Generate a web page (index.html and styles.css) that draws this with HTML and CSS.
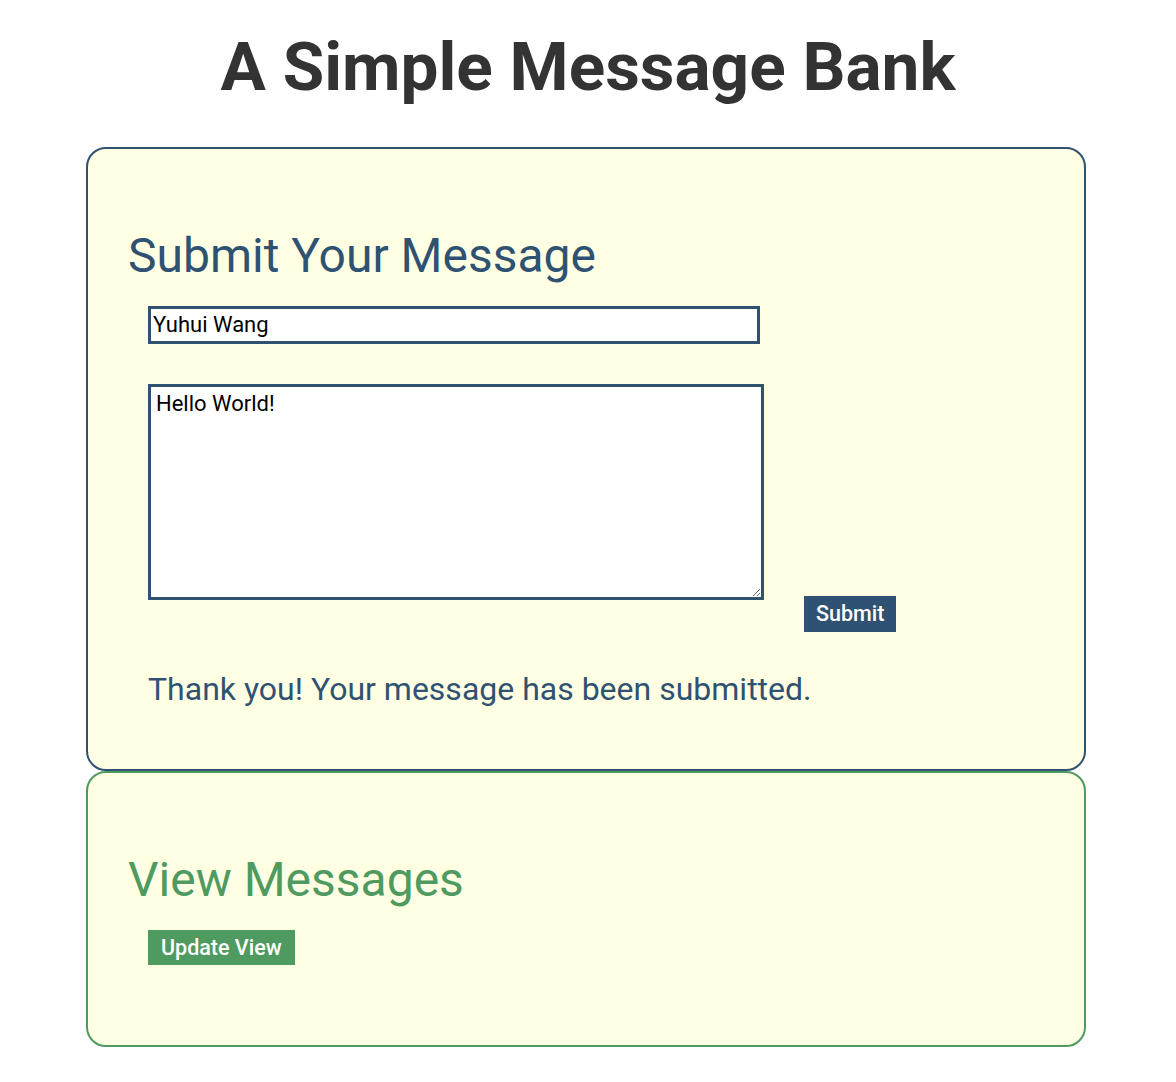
FILE: index.html
```html
<!DOCTYPE html>
<html>
<head>
<meta charset="utf-8">
<link rel="stylesheet" href="styles.css">
</head>
<body>
<h1 class="title">A Simple Message Bank</h1>
<section class="card card-submit">
  <h2 class="card-heading">Submit Your Message</h2>
  <div class="form">
    <input class="name-input" type="text" value="Yuhui Wang">
    <div class="message-row">
      <textarea class="message-input">Hello World!</textarea>
      <button class="btn btn-blue">Submit</button>
    </div>
    <p class="thanks">Thank you! Your message has been submitted.</p>
  </div>
</section>
<section class="card card-view">
  <h2 class="card-heading">View Messages</h2>
  <div class="form">
    <button class="btn btn-green">Update View</button>
  </div>
</section>
</body>
</html>
```
FILE: styles.css
```css
body {
  margin: 0;
  font-family: Roboto, "Noto Sans", sans-serif;
  background: #ffffff;
}
.title {
  margin: 26px 0 40px;
  text-align: center;
  font-size: 67.5px;
  font-weight: 700;
  color: #333333;
  line-height: 1.2;
}
.card {
  margin: 0 90px 0 86px;
  box-sizing: border-box;
  border: 2px solid;
  border-radius: 20px;
  background: #ffffe4;
  padding: 78px 40px 61px;
}
.card-submit {
  border-color: #2f5273;
  color: #2f5273;
}
.card-view {
  border-color: #4e9a60;
  color: #4e9a60;
  padding-bottom: 80px;
}
.card-heading {
  margin: 0 0 21px;
  font-size: 48px;
  font-weight: 400;
  line-height: 1.2;
}
.form {
  padding-left: 20px;
}
.name-input {
  display: block;
  width: 612px;
  height: 38px;
  box-sizing: border-box;
  border: 3px solid #2f5273;
  padding: 0 2px;
  font-family: Roboto, sans-serif;
  font-size: 22px;
  color: #000;
  outline: none;
}
.message-row {
  display: flex;
  gap: 40px;
  margin-top: 40px;
}
.message-input {
  width: 616px;
  height: 216px;
  box-sizing: border-box;
  border: 3px solid #2f5273;
  padding: 4px 5px;
  font-family: Roboto, sans-serif;
  font-size: 22px;
  color: #000;
  resize: both;
  outline: none;
}
.btn {
  border: none;
  color: #ffffff;
  font-family: Roboto, sans-serif;
  font-size: 21.5px;
  font-weight: 500;
  padding: 0 12px;
  height: 36px;
  cursor: pointer;
}
.btn-blue {
  background: #2f5273;
  margin-top: 212px;
}
.btn-green {
  background: #4e9a60;
  height: 35px;
  padding: 0 13px;
}
.thanks {
  margin: 38px 0 0;
  font-size: 32px;
  line-height: 1.2;
}
```
